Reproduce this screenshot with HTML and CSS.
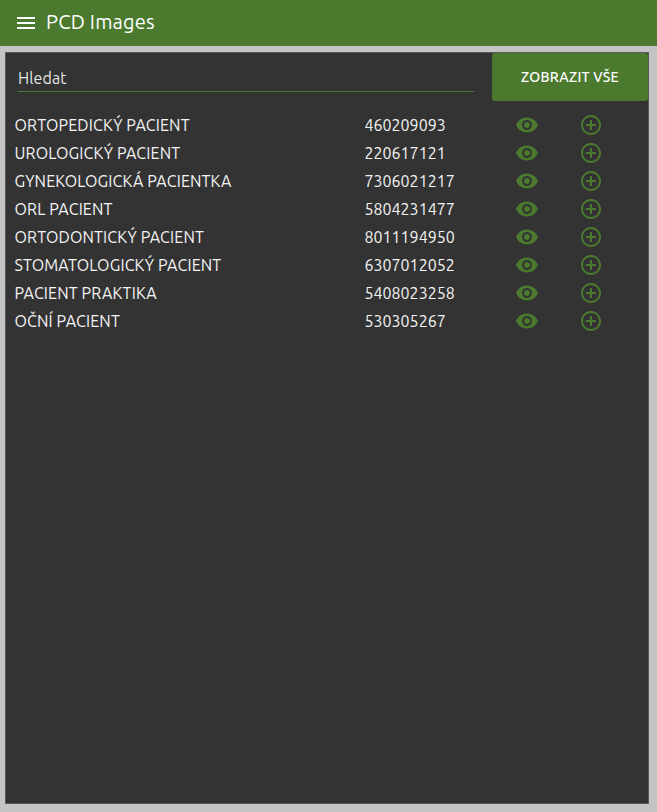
FILE: index.html
```html
<!DOCTYPE html>
<html lang="cs">
<head>
<meta charset="utf-8">
<title>PCD Images</title>
<link rel="stylesheet" href="styles.css">
</head>
<body>
<svg class="defs" aria-hidden="true">
<symbol id="eye" viewBox="0 0 24 24"><path d="M12 4.500C7 4.500 2.730 7.610 1 12c1.730 4.390 6 7.500 11 7.500s9.270-3.110 11-7.500c-1.730-4.390-6-7.500-11-7.500zM12 17c-2.760 0-5-2.240-5-5s2.240-5 5-5 5 2.240 5 5-2.240 5-5 5zm0-8c-1.660 0-3 1.340-3 3s1.340 3 3 3 3-1.340 3-3-1.340-3-3-3z"/></symbol>
<symbol id="add" viewBox="0 0 24 24"><path d="M13 7h-2v4H7v2h4v4h2v-4h4v-2h-4V7zm-1-5C6.480 2 2 6.480 2 12s4.480 10 10 10 10-4.480 10-10S17.520 2 12 2zm0 18c-4.410 0-8-3.590-8-8s3.590-8 8-8 8 3.590 8 8-3.590 8-8 8z"/></symbol>
</svg>
<header class="bar">
<svg class="menu" viewBox="0 0 24 24"><path d="M3 18h18v-2H3v2zm0-5h18v-2H3v2zm0-7v2h18V6H3z"/></svg>
<h1 class="title">PCD Images</h1>
</header>
<main class="card">
<div class="tools">
<div class="search"><span class="label">Hledat</span></div>
<button class="show-all">ZOBRAZIT VŠE</button>
</div>
<div class="list">
<div class="row"><span class="name">ORTOPEDICKÝ PACIENT</span><span class="code">460209093</span><svg class="icon"><use href="#eye"/></svg><svg class="icon"><use href="#add"/></svg></div>
<div class="row"><span class="name">UROLOGICKÝ PACIENT</span><span class="code">220617121</span><svg class="icon"><use href="#eye"/></svg><svg class="icon"><use href="#add"/></svg></div>
<div class="row"><span class="name">GYNEKOLOGICKÁ PACIENTKA</span><span class="code">7306021217</span><svg class="icon"><use href="#eye"/></svg><svg class="icon"><use href="#add"/></svg></div>
<div class="row"><span class="name">ORL PACIENT</span><span class="code">5804231477</span><svg class="icon"><use href="#eye"/></svg><svg class="icon"><use href="#add"/></svg></div>
<div class="row"><span class="name">ORTODONTICKÝ PACIENT</span><span class="code">8011194950</span><svg class="icon"><use href="#eye"/></svg><svg class="icon"><use href="#add"/></svg></div>
<div class="row"><span class="name">STOMATOLOGICKÝ PACIENT</span><span class="code">6307012052</span><svg class="icon"><use href="#eye"/></svg><svg class="icon"><use href="#add"/></svg></div>
<div class="row"><span class="name">PACIENT PRAKTIKA</span><span class="code">5408023258</span><svg class="icon"><use href="#eye"/></svg><svg class="icon"><use href="#add"/></svg></div>
<div class="row"><span class="name">OČNÍ PACIENT</span><span class="code">530305267</span><svg class="icon"><use href="#eye"/></svg><svg class="icon"><use href="#add"/></svg></div>
</div>
</main>
</body>
</html>
```

FILE: styles.css
```css
* { box-sizing: border-box; }
body {
  margin: 0;
  height: 812px;
  display: flex;
  flex-direction: column;
  background: #c4c4c4;
  color: #f4f4f4;
  font-family: Ubuntu, "Noto Sans", sans-serif;
  font-size: 16px;
  overflow: hidden;
}
.defs { display: none; }
.bar {
  height: 46px;
  flex: none;
  display: flex;
  align-items: center;
  padding: 0 14px 2px;
  gap: 8px;
  background: #4b7a2f;
}
.menu { width: 24px; height: 24px; fill: #fff; margin-top: 2px; }
.title { margin: 0; font-size: 20px; font-weight: 400; line-height: 28px; letter-spacing: 0.22px; color: #fff; }
.card {
  flex: 1;
  margin: 6px 8px 8px 5px;
  border: 1px solid #5a5a5a;
  background: #333;
}
.tools { display: flex; justify-content: space-between; height: 48px; }
.search {
  width: 456px;
  height: 39px;
  margin-left: 12px;
  padding-top: 14px;
  border-bottom: 1px solid #4b7a2f;
  line-height: 22px;
  letter-spacing: 0.1px;
  color: #e4e4e4;
}
.show-all {
  width: 156px;
  height: 48px;
  border: 0;
  padding: 0;
  border-radius: 3px;
  background: #4b7a2f;
  color: #fff;
  font-family: inherit;
  font-size: 14px;
  font-weight: 500;
  letter-spacing: 0.22px;
}
.list { padding: 10px 0 0 8.5px; }
.row {
  display: grid;
  grid-template-columns: 350px 150.5px 64px 64px;
  align-items: center;
  height: 28px;
  line-height: 28px;
  white-space: nowrap;
}
.name { letter-spacing: 0.14px; }
.icon { width: 24px; height: 24px; fill: #4b7a2f; }
```
